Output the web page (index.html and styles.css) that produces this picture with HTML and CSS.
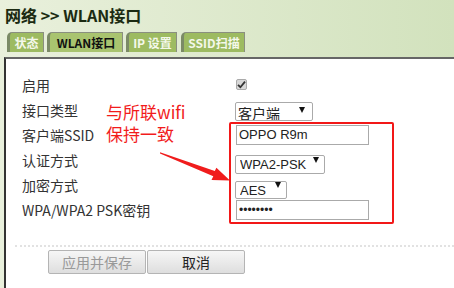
FILE: index.html
```html
<!DOCTYPE html>
<html lang="zh-CN">
  <head>
    <meta charset="UTF-8" />
    <title>WLAN接口</title>
    <link rel="stylesheet" href="styles.css">
  </head>
  <body>
    <div class="top">
      <h1>网络 &gt;&gt; WLAN接口</h1>
      <ul class="tabs">
        <li class="tab t1">状态</li>
        <li class="tab t2 active">WLAN接口</li>
        <li class="tab t3">IP 设置</li>
        <li class="tab t4">SSID扫描</li>
      </ul>
    </div>

    <div class="panel">
      <div class="form">
        <label>启用</label>
        <div class="field"><span class="check"><svg width="9" height="9" viewBox="0 0 9 9"><path d="M1 4.8 L3.4 7.2 L8 1.6" fill="none" stroke="#333" stroke-width="1.8"/></svg></span></div>

        <label>接口类型</label>
        <div class="field"><span class="select w-mode"><select><option>客户端</option></select></span></div>

        <label>客户端SSID</label>
        <div class="field"><input class="text" type="text" value="OPPO R9m"></div>

        <label>认证方式</label>
        <div class="field"><span class="select w-auth"><select><option>WPA2-PSK</option></select></span></div>

        <label>加密方式</label>
        <div class="field"><span class="select w-enc"><select><option>AES</option></select></span></div>

        <label>WPA/WPA2 PSK密钥</label>
        <div class="field"><input class="text pass" type="password" value="12345678"></div>
      </div>

      <div class="divider"></div>

      <div class="buttons">
        <button class="btn disabled">应用并保存</button>
        <button class="btn">取消</button>
      </div>

      <!-- annotation drawn over the form -->
      <div class="note">与所联wifi<br>保持一致</div>
      <div class="redbox"></div>
      <svg class="arrow" width="80" height="40" viewBox="150 145 80 40">
        <polygon points="160,152.2 214.8,171 216.4,167.8 230,180.5 211.5,180 213.3,176.2 160,153.6" fill="#f01c1c"/>
      </svg>
    </div>
  </body>
</html>
```

FILE: styles.css
```css
* {
  margin: 0;
  padding: 0;
  box-sizing: border-box;
}
body {
  width: 454px;
  height: 288px;
  overflow: hidden;
  font-family: "Noto Sans CJK SC", "Noto Sans", sans-serif;
  background: linear-gradient(to right, #e9f0dc, #d2e2bd);
  color: #333;
}
.top {
  height: 57px;
  padding: 4px 0 0 5px;
}
h1 {
  font-size: 16px;
  line-height: 22px;
  font-weight: bold;
  color: #1b2a12;
  text-shadow: 0 0 1px #cfdcbc;
}
.tabs {
  list-style: none;
  display: flex;
  margin-top: 6px;
  padding-left: 2px;
}
.tab {
  height: 20px;
  line-height: 19px;
  font-size: 12px;
  font-weight: bold;
  color: #f4f8ea;
  text-align: center;
  background: #9dbb61;
  border: 1px solid #8a8f80;
  border-bottom: none;
  border-left: 3px solid #7b8a66;
  border-top-left-radius: 5px;
  margin-right: 3px;
}
.tab.active {
  color: #111;
  background: #a9c46f;
}
.t1 { width: 37px; }
.t2 { width: 76px; margin-right: 3px; }
.t3 { width: 51px; margin-right: 4px; }
.t4 { width: 64px; }

.panel {
  position: relative;
  height: 231px;
  margin-left: 4px;
  background: #fff;
  border-top: 2px solid #666;
  border-left: 2px solid #333;
}
.form {
  display: grid;
  grid-template-columns: 213px 1fr;
  grid-auto-rows: 25px;
  align-items: center;
  padding: 13px 0 0 16px;
}
.form label {
  justify-self: start;
  font-size: 14px;
  color: #333;
}
.field {
  display: flex;
  align-items: center;
}
.check {
  display: flex;
  align-items: center;
  justify-content: center;
  width: 11px;
  height: 11px;
  margin-left: 1px;
  background: #d8d8d8;
  border: 1px solid #aaa;
  border-radius: 2px;
}
.text {
  width: 133px;
  height: 20px;
  margin-left: 1px;
  padding: 0 2px;
  border: 1px solid #aaa;
  font-family: "Liberation Sans", Arial, sans-serif;
  font-size: 13px;
  color: #222;
  outline: none;
}
.pass {
  font-size: 12px;
  letter-spacing: 0;
}
.select {
  position: relative;
  display: inline-block;
}
.select select {
  appearance: none;
  width: 100%;
  height: 100%;
  padding: 0 0 0 4px;
  border: 1px solid #aaa;
  border-radius: 2px;
  background: #fff;
  font-family: "Liberation Sans", Arial, sans-serif;
  font-size: 13px;
  color: #222;
}
.select::after {
  content: "";
  position: absolute;
  top: 50%;
  right: 6px;
  margin-top: -3px;
  border-left: 3.5px solid transparent;
  border-right: 3.5px solid transparent;
  border-top: 6px solid #111;
}
.w-mode { width: 78px; height: 19px; }
.w-mode select { font-family: "Noto Sans CJK SC", sans-serif; font-size: 14px; padding-left: 2px; }
.w-mode::after { right: 8px; }
.w-auth { width: 90px; height: 19px; }
.w-enc { width: 52px; height: 18px; }

.divider {
  margin: 23px 0 0 9px;
  border-top: 2px dotted #e2e2e2;
}
.buttons {
  display: flex;
  padding: 3px 0 0 42px;
}
.btn {
  width: 98px;
  height: 24px;
  font-family: "Noto Sans CJK SC", sans-serif;
  font-size: 14px;
  color: #222;
  background: linear-gradient(#f6f6f6, #dedede);
  border: 1px solid #b4b4b4;
  border-radius: 2px;
}
.btn.disabled {
  color: #999;
  margin-right: 1px;
}

.note {
  position: absolute;
  left: 100px;
  top: 42px;
  font-size: 17px;
  line-height: 22px;
  color: #f21c1c;
}
.redbox {
  position: absolute;
  left: 223px;
  top: 63px;
  width: 165px;
  height: 102px;
  border: 2px solid #f21818;
  border-radius: 2px;
}
.arrow {
  position: absolute;
  left: 144px;
  top: 86px;
}
```
